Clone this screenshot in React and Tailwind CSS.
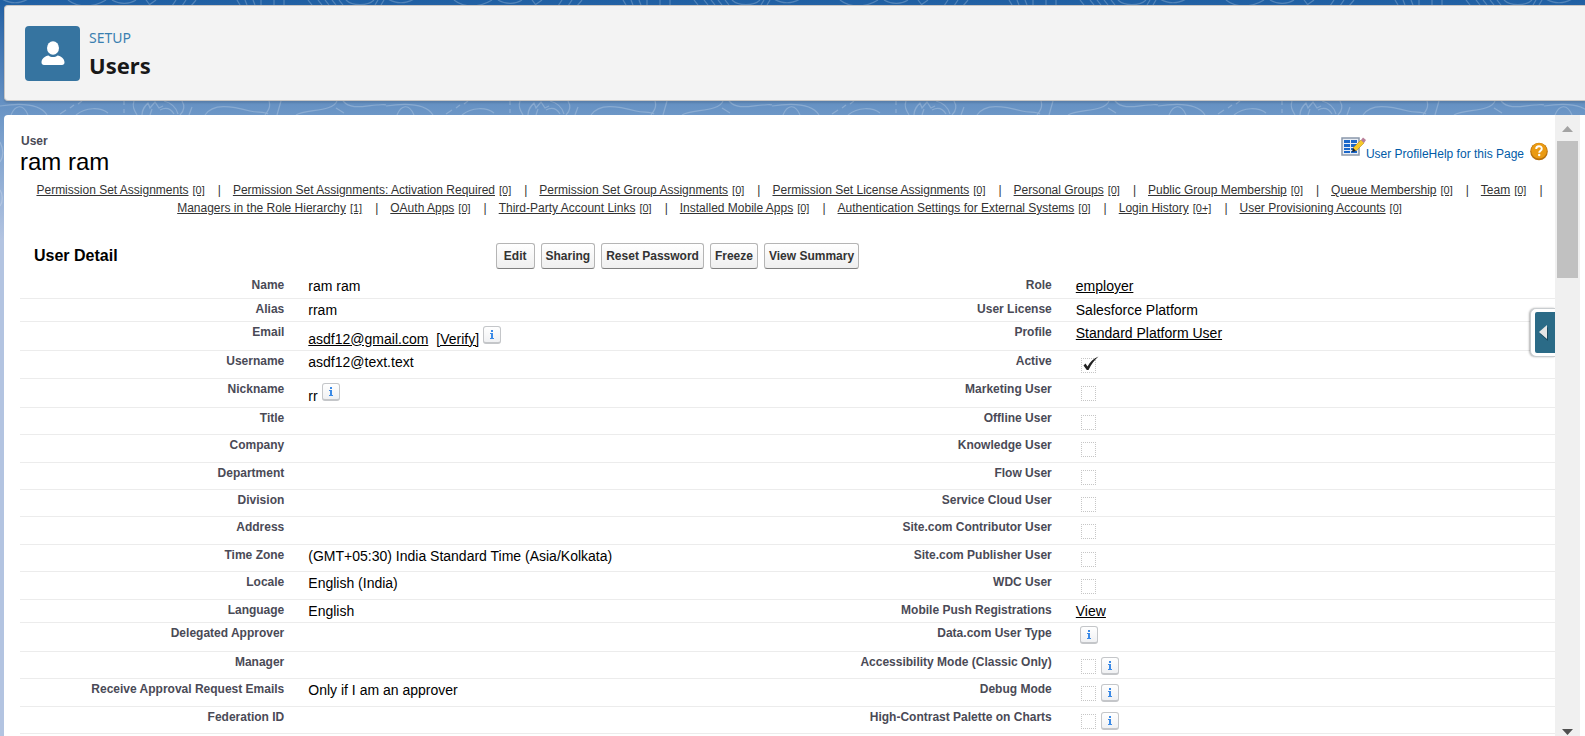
const ROW = {
  s: "h-[23px]",
  m: "h-[27px]",
  l: "h-[28px]",
  x: "h-[29px]",
};

function Contours() {
  return (
    <svg className="absolute inset-0 h-full w-full" aria-hidden="true">
      <defs>
        <pattern id="topo" width="386" height="240" patternUnits="userSpaceOnUse">
          <g fill="none" stroke="#ffffff" strokeOpacity="0.22" strokeWidth="1.2">
            <path d="M68 0c10 8 25 8 38 0M112 0c8 5 18 4 24 0M146 0l4 5M156 0c-4 3-6 4-8 6M176 0l-4 6M186 0l-4 6M196 0l-5 6M2 -1c8 5 18 5 26 0" />
            <path d="M237 0l3 5M245 0l2 5M253 0l2 5M261 0v5M274 0v5M284 0v5M308 0l4 5M318 0l4 5M325 0l4 5M332 0l4 5M339 0l4 5M346 0c6 6 22 6 28 0M378 0l-3 5M384 0l-3 5" />
            <path d="M0 106c20-3 40-2 47 9M11 115c4-10 12-12 17 0M70 108l4-3M78 104l4-3M60 114l6-4M76 115c10-8 24-8 32-2" />
            <path d="M134 101c-2 5 0 9 3 14M142 115c0-6 3-9 6-12l2 5 5-6 4 6 4-2M150 115l2-6M164 101c8 2 12 6 14 13M160 110c6-3 11-1 14 4M182 101c3 5 2 10-2 14M192 107l-3 8M124 101v4M124 109v4" />
            <path d="M205 115c8-12 26-9 45-4c8 2 14 0 18 3M269 101c2 6-1 10-4 14M281 101l-4 14M296 115c10-6 37-3 41-14M336 108l8 5M343 101c8 9 20 5 34 4c4 0 7-1 9 0" />
            <path d="M0 142c3 6 4 14 0 20M0 190c3 4 3 12 0 16" />
          </g>
        </pattern>
      </defs>
      <rect width="100%" height="240" fill="url(#topo)" />
    </svg>
  );
}

function Info({ label }) {
  return (
    <button
      type="button"
      aria-label={"Help for " + label}
      className="flex h-[18px] w-[18px] shrink-0 items-center justify-center rounded-[3px] border border-b-2 border-[#c4c6c9] bg-linear-to-b from-white to-[#f0f1f3]"
    >
      <svg width="6" height="9" viewBox="0 0 6 9" fill="#3b8ae6" aria-hidden="true">
        <path d="M2 0h2v2H2zM1 3h3v5h1v1H1V8h1V4H1z" />
      </svg>
    </button>
  );
}

function Tick({ label, checked }) {
  return (
    <span className="relative flex h-[15px] w-[15px] shrink-0">
      <input
        type="checkbox"
        aria-label={label}
        checked={!!checked}
        readOnly
        className="h-[15px] w-[15px] appearance-none border border-dotted border-[#c6c6c6] bg-white"
      />
      {checked && (
        <svg className="pointer-events-none absolute -top-[2px] left-[2px]" width="16" height="15" viewBox="0 0 16 15" aria-hidden="true">
          <path d="M0.5 9.5L2.5 7.5 4.5 10.5C7 6 10.5 2.5 15.5 0.5 11.500 4 8.500 8 5.500 14H3.800Z" fill="#222" />
        </svg>
      )}
    </span>
  );
}

function A({ children }) {
  return (
    <a href="#" className="underline">
      {children}
    </a>
  );
}

const rows = [
  ["s", "Name", "ram ram", "Role", <A>employer</A>],
  ["s", "Alias", "rram", "User License", "Salesforce Platform"],
  [
    "x",
    "Email",
    <div className="flex">
      <span className="pt-[6px]">
        <A>asdf12@gmail.com</A>
      </span>
      <span className="pt-[6px] pl-2">
        <A>[Verify]</A>
      </span>
      <span className="pt-px pl-1">
        <Info label="Email" />
      </span>
    </div>,
    "Profile",
    <A>Standard Platform User</A>,
  ],
  ["l", "Username", "asdf12@text.text", "Active", "on"],
  [
    "x",
    "Nickname",
    <div className="flex">
      <span className="pt-[6px]">rr</span>
      <span className="pt-px pl-1">
        <Info label="Nickname" />
      </span>
    </div>,
    "Marketing User",
    "off",
  ],
  ["m", "Title", "", "Offline User", "off"],
  ["l", "Company", "", "Knowledge User", "off"],
  ["m", "Department", "", "Flow User", "off"],
  ["m", "Division", "", "Service Cloud User", "off"],
  ["l", "Address", "", "Site.com Contributor User", "off"],
  ["m", "Time Zone", "(GMT+05:30) India Standard Time (Asia/Kolkata)", "Site.com Publisher User", "off"],
  ["l", "Locale", "English (India)", "WDC User", "off"],
  ["s", "Language", "English", "Mobile Push Registrations", <A>View</A>],
  ["x", "Delegated Approver", "", "Data.com User Type", "info"],
  ["m", "Manager", "", "Accessibility Mode (Classic Only)", "off+info"],
  ["l", "Receive Approval Request Emails", "Only if I am an approver", "Debug Mode", "off+info"],
  ["m", "Federation ID", "", "High-Contrast Palette on Charts", "off+info"],
];

function Value({ value, label }) {
  if (value === "info")
    return (
      <div className="pl-1">
        <Info label={label} />
      </div>
    );
  if (value === "on" || value === "off" || value === "off+info")
    return (
      <div className="flex items-center gap-[5px] pl-[5px]">
        <span className="pt-1">
          <Tick label={label} checked={value === "on"} />
        </span>
        {value === "off+info" && (
          <span className="pt-[2px]">
            <Info label={label} />
          </span>
        )}
      </div>
    );
  return value;
}

const links = [
  ["Permission Set Assignments", "[0]"],
  ["Permission Set Assignments: Activation Required", "[0]"],
  ["Permission Set Group Assignments", "[0]"],
  ["Permission Set License Assignments", "[0]"],
  ["Personal Groups", "[0]"],
  ["Public Group Membership", "[0]"],
  ["Queue Membership", "[0]"],
  ["Team", "[0]"],
  ["Managers in the Role Hierarchy", "[1]"],
  ["OAuth Apps", "[0]"],
  ["Third-Party Account Links", "[0]"],
  ["Installed Mobile Apps", "[0]"],
  ["Authentication Settings for External Systems", "[0]"],
  ["Login History", "[0+]"],
  ["User Provisioning Accounts", "[0]"],
];

const th = "pt-[3px] pr-3 text-right align-top text-[12px] leading-[14px] font-bold text-[#4a4a56]";
const td = "pt-[3px] pl-3 align-top text-[14px] leading-[16px] text-black";

export default function App() {
  return (
    <div className="relative h-screen overflow-hidden bg-[#b3c4e1] font-['Liberation_Sans',Arial,sans-serif]">
      <div className="absolute inset-x-0 top-0 h-[240px] bg-linear-to-b from-[#1f5fa3] via-[#7099c8] to-[#b3c4e1]">
        <Contours />
      </div>

      <div className="relative flex h-full flex-col pt-[5px] pl-1">
        <header className="flex h-24 shrink-0 items-start rounded-l-[4px] border border-r-0 border-[#c9c7c5] bg-[#f3f3f3] pt-5 pl-5 shadow-[0_2px_2px_rgba(0,0,0,0.12)]">
          <div className="flex h-[55px] w-[55px] items-center justify-center rounded-[4px] bg-[#3674a0]">
            <svg width="24" height="25" viewBox="0 0 24 25" fill="#fff" aria-hidden="true">
              <ellipse cx="12" cy="7" rx="6" ry="6.800" />
              <path d="M7.500 14.500c1.300 1 2.800 1.500 4.500 1.500s3.200-.5 4.500-1.500c3.500.6 7 3 7 7 0 1.500-1 2.500-2.500 2.500H3c-1.500 0-2.500-1-2.500-2.500 0-4 3.500-6.400 7-7z" />
            </svg>
          </div>
          <div className="pt-[2px] pl-[9px] font-['Noto_Sans','Open_Sans',sans-serif]">
            <p className="text-[14px] leading-[20px] text-[#3a7fb0]">SETUP</p>
            <h1 className="pt-[2px] text-[22px] leading-[30px] font-bold text-[#181818]">Users</h1>
          </div>
        </header>

        <div className="mt-[14px] flex min-h-0 flex-1 rounded-tl-[4px] bg-white pr-[5px]">
          <main className="relative min-w-0 flex-1 overflow-hidden pt-[18px] pl-4">
            <div className="flex items-start justify-between pr-[7px]">
              <div>
                <p className="pl-[1px] text-[12px] leading-[16px] font-bold text-[#4a4a56]">User</p>
                <h2 className="text-[24px] leading-[26px] text-black">ram ram</h2>
              </div>
              <div className="flex items-start pt-[3px] text-[12px] leading-[16px] text-[#015ba7]">
                <svg width="25" height="21" viewBox="0 0 25 21" aria-hidden="true">
                  <rect x="1" y="2" width="17" height="17" fill="#e9eef5" stroke="#8b98aa" strokeWidth="1.500" />
                  <path d="M3 4h6v3H3zM10 4h6v3h-6zM3 8h6v3H3zM10 8h6v3h-6zM3 12h6v2H3zM3 15h6v2H3zM10 12h3v2h-3zM10 15h6v2h-6z" fill="#1b67c9" />
                  <path d="M12 12l8-8 3 3-8 8z" fill="#f6c928" stroke="#b98a16" strokeWidth="0.600" />
                  <path d="M20 4l2-2.500 3 2.500-2 3z" fill="#b97f99" />
                  <path d="M11 16l1-4 3 3z" fill="#222" />
                </svg>
                <a href="#" className="pt-[10px]">User Profile</a>
                <a href="#" className="pt-[10px]">Help for this Page</a>
                <svg className="mt-[6px] ml-[6px]" width="18" height="19" viewBox="0 0 18 19" aria-hidden="true">
                  <circle cx="9" cy="9.500" r="8.800" fill="#b8700c" />
                  <circle cx="9" cy="8.800" r="7.800" fill="#ea9a12" />
                  <path d="M6.200 7c0-3.600 5.600-3.600 5.600-.3 0 1.900-2.500 2-2.600 4" fill="none" stroke="#fff" strokeWidth="1.900" />
                  <circle cx="9.200" cy="13" r="1.200" fill="#fff" />
                </svg>
              </div>
            </div>

            <nav className="mt-[6px] flex flex-wrap justify-center gap-x-3 pr-2 pl-3 text-[12px] leading-[18px] text-[#333]">
              {links.map(([name, count], i) => (
                <span key={name} className="flex whitespace-nowrap">
                  <a href="#" className="underline">{name}</a>
                  <a href="#" className="pl-1 text-[11px] underline">{count}</a>
                  {i < links.length - 1 && <span className="pl-[13px]">|</span>}
                </span>
              ))}
            </nav>

            <div className="mt-[26px] flex items-center">
              <h3 className="w-[31%] pl-[14px] text-[16px] leading-[20px] font-bold text-black">User Detail</h3>
              <div className="flex gap-[6px]">
                {["Edit", "Sharing", "Reset Password", "Freeze", "View Summary"].map((b) => (
                  <button
                    key={b}
                    type="button"
                    className={
                      (b === "Edit" ? "px-[7px]" : "px-1") +
                      " h-[26px] rounded-[3px] border border-[#b5b5b5] border-b-[#7f7f7f] bg-linear-to-b from-white to-[#efefef] text-[12px] font-bold text-[#333]"
                    }
                  >
                    {b}
                  </button>
                ))}
              </div>
            </div>

            <table className="mt-[6px] w-full table-fixed border-collapse">
              <colgroup>
                <col className="w-[18%]" />
                <col className="w-[32%]" />
                <col className="w-[18%]" />
                <col className="w-[32%]" />
              </colgroup>
              <tbody>
                {rows.map(([size, l1, v1, l2, v2]) => (
                  <tr key={l1} className={ROW[size] + " border-b border-[#ececec]"}>
                    <th scope="row" className={th}>{l1}</th>
                    <td className={td}>{v1}</td>
                    <th scope="row" className={th}>{l2}</th>
                    <td className={td}>
                      <Value value={v2} label={l2} />
                    </td>
                  </tr>
                ))}
              </tbody>
            </table>

            <button
              type="button"
              aria-label="Open sidebar"
              className="absolute top-[193px] right-0 flex h-[49px] w-[25px] items-center rounded-l-[6px] border border-r-0 border-[#c9cdd0] bg-white pl-1 shadow-[-1px_0_2px_rgba(0,0,0,0.3)]"
            >
              <span className="flex h-[41px] w-full items-center rounded-l-[2px] bg-[#2b6b87] pl-1">
                <svg width="9" height="16" viewBox="0 0 9 16" aria-hidden="true">
                  <path d="M9 2v14L1 9z" fill="#1b4a60" />
                  <path d="M8 0v14L0 7z" fill="#e6e6e6" />
                </svg>
              </span>
            </button>
          </main>

          <div className="flex w-[25px] shrink-0 flex-col items-center bg-[#f0f0f0]" aria-hidden="true">
            <svg className="mt-[11px] mb-[9px] shrink-0" width="11" height="6" viewBox="0 0 11 6">
              <path d="M0 6L5.500 0 11 6z" fill="#a3a3a3" />
            </svg>
            <div className="h-[137px] w-[21px] shrink-0 bg-[#c1c1c1]" />
            <svg className="mt-auto mb-[1px] shrink-0" width="11" height="6" viewBox="0 0 11 6">
              <path d="M0 0h11L5.500 6z" fill="#505050" />
            </svg>
          </div>
        </div>
      </div>
    </div>
  );
}
